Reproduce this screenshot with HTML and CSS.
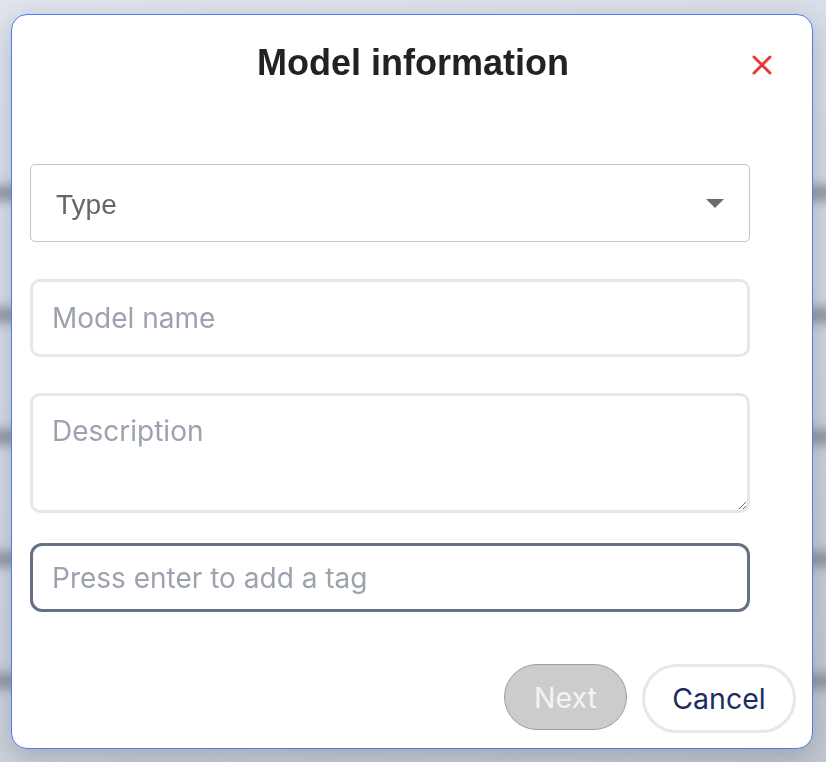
FILE: index.html
```html
<!DOCTYPE html>
<html lang="en">
<head>
  <meta charset="UTF-8" />
  <meta name="viewport" content="width=device-width, initial-scale=1.0" />
  <title>Model information</title>
  <link rel="stylesheet" href="styles.css">
</head>
<body>
  <!-- page behind the dialog, blurred -->
  <div class="backdrop">
    <div class="bg-row"><span class="bg-line"></span></div>
    <div class="bg-row"><span class="bg-line"></span></div>
    <div class="bg-row"><span class="bg-line"></span></div>
    <div class="bg-row"><span class="bg-line"></span></div>
    <div class="bg-row"><span class="bg-line"></span></div>
  </div>

  <div class="modal">
    <div class="modal-header">
      <h1>Model information</h1>
      <button type="button" class="close-btn" aria-label="Close">
        <svg width="20" height="20" viewBox="0 0 20 20">
          <path d="M2 2 L18 18 M18 2 L2 18" stroke="#e53935" stroke-width="3" stroke-linecap="round" />
        </svg>
      </button>
    </div>

    <form class="model-form">
      <div class="select-box">
        <span class="select-label">Type</span>
        <span class="select-arrow"></span>
      </div>
      <input type="text" class="field field-name" placeholder="Model name" />
      <textarea class="field field-desc" placeholder="Description"></textarea>
      <input type="text" class="field field-tag" placeholder="Press enter to add a tag" />
    </form>

    <div class="actions">
      <button type="button" class="btn btn-next" disabled>Next</button>
      <button type="button" class="btn btn-cancel">Cancel</button>
    </div>
  </div>
</body>
</html>
```

FILE: styles.css
```css
html, body { margin: 0; height: 100%; }
body {
  background: linear-gradient(160deg, #e1e5ee 0%, #d3d8e2 55%, #c3c7d0 100%);
  font-family: Inter, "Liberation Sans", sans-serif;
  overflow: hidden;
}

.backdrop { padding-top: 186px; }
.bg-row { height: 122px; }
.bg-line {
  display: block;
  height: 14px;
  margin: 0 -20px;
  background: #8c919b;
  filter: blur(6px);
}

.modal {
  position: fixed;
  top: 14px;
  left: 11px;
  width: 802px;
  height: 735px;
  box-sizing: border-box;
  background: #fff;
  border: 1px solid #4a7cf2;
  border-radius: 16px;
  box-shadow: 0 8px 28px rgba(40, 48, 64, 0.25);
  padding: 27px 16px 0 18px;
}

.modal-header { position: relative; text-align: center; }
.modal-header h1 {
  margin: 0;
  font-family: "Liberation Sans", Arial, sans-serif;
  font-size: 36px;
  line-height: 42px;
  font-weight: bold;
  color: #222;
}
.close-btn {
  position: absolute;
  top: 13px;
  right: 24px;
  padding: 0;
  border: 0;
  background: none;
  width: 20px;
  height: 20px;
  cursor: pointer;
}
.close-btn svg { display: block; }

.model-form {
  display: flex;
  flex-direction: column;
  width: 720px;
  margin-top: 80px;
}

.select-box {
  display: flex;
  align-items: center;
  justify-content: space-between;
  height: 78px;
  box-sizing: border-box;
  border: 1px solid #c4c4c4;
  border-radius: 5px;
  padding: 0 25px;
  margin-bottom: 37px;
}
.select-label {
  font-family: "Liberation Sans", Arial, sans-serif;
  font-size: 28px;
  color: #666;
  padding-top: 3px;
}
.select-arrow {
  width: 0;
  height: 0;
  border-left: 9px solid transparent;
  border-right: 9px solid transparent;
  border-top: 9px solid #6b6b6b;
}

.field {
  box-sizing: border-box;
  width: 100%;
  border: 3px solid #e5e7eb;
  border-radius: 10px;
  padding: 0 19px;
  font-family: Inter, "Liberation Sans", sans-serif;
  font-size: 28px;
  color: #333;
  background: #fff;
  outline: none;
}
.field::placeholder { color: #9ca3af; }
.field-name { height: 78px; margin-bottom: 36px; }
.field-desc {
  height: 120px;
  padding-top: 18px;
  margin-bottom: 30px;
  resize: vertical;
}
.field-tag {
  height: 69px;
  border-color: #667185;
  border-radius: 12px;
}

.actions {
  display: flex;
  justify-content: flex-end;
  align-items: flex-start;
  gap: 15px;
  margin-top: 52px;
}
.btn {
  font-family: Inter, "Liberation Sans", sans-serif;
  font-size: 28.5px;
  border-radius: 40px;
  cursor: pointer;
}
.btn-next {
  width: 123px;
  height: 66px;
  background: #cccccc;
  border: 1px solid #9d9d9d;
  color: #f4f4f4;
}
.btn-cancel {
  width: 154px;
  height: 69px;
  background: #fff;
  border: 3px solid #e5e7eb;
  color: #1b2c5e;
}
```
